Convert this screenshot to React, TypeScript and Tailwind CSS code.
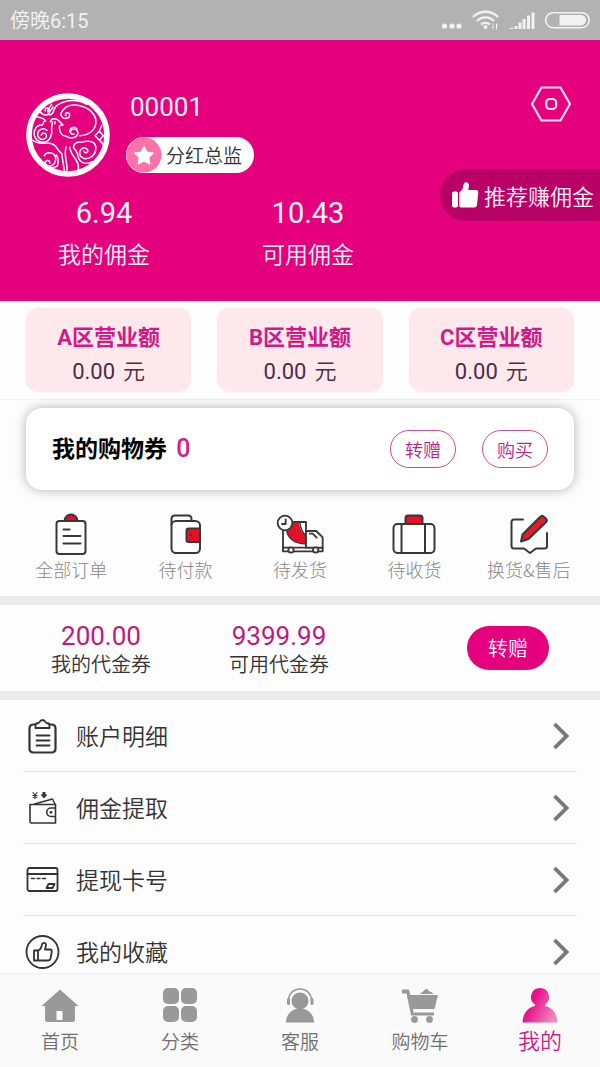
import type { ReactNode } from 'react';

interface StatProps {
  value: string;
  label: string;
}

function StatusBar() {
  return (
    <div className="flex h-10 shrink-0 items-center justify-between bg-[#b2b2b2] pr-2 pl-2.5 text-[#f2f2f2]">
      <span className="text-xl">
        傍晚<span className="font-[Roboto] font-normal">6:15</span>
      </span>
      <svg className="h-6 w-40" viewBox="432 8 160 24" fill="currentColor" aria-hidden="true">
        <circle cx="444.500" cy="26" r="2.600" />
        <circle cx="452" cy="26" r="2.600" />
        <circle cx="459" cy="26" r="2.600" />
        <g fill="none" stroke="currentColor" strokeWidth="2.300">
          <path d="M473 17a17.500 17.500 0 0 1 25 0" />
          <path d="M477 21a12 12 0 0 1 17 0" />
          <path d="M481 24.500a7 7 0 0 1 9 0" />
        </g>
        <circle cx="485.500" cy="27" r="2" />
        <path d="M493.500 23v6.500l-2-2.500h1.200V24zM496 29.500V23l2.500 2.500H497v3.500z" />
        <path d="M509 29l4-2v2zM514.500 26h3v3h-3zM518.500 22.500h3V29h-3zM522.500 19h3v10h-3zM527 15.500h3V29h-3zM531.500 12.500h3V29h-3z" />
        <rect x="545.700" y="12.700" width="43.500" height="15" rx="7.500" fill="none" stroke="currentColor" strokeWidth="1.600" />
        <path d="M559.500 15H581a5 5 0 0 1 5 5.200 5 5 0 0 1-5 5.200h-21.500z" />
      </svg>
    </div>
  );
}

function Avatar() {
  return (
    <svg className="mt-[7px] size-[84px] shrink-0" viewBox="35 38 252 252" fill="none" stroke="#fff" strokeLinecap="round" strokeLinejoin="round" strokeWidth="4.500" role="img" aria-label="头像">
      <circle cx="161" cy="164" r="117" strokeWidth="17" />
      {/* body and tail */}
      <path d="M106 104c16-2 8-22 24-30 26-18 62-18 88-2M112 72c-4 10-14 12-12 22 8 2 12-8 16-14" />
      <path d="M144 92c14-22 46-22 70-10 22 10 34 30 30 50-4 20-24 34-48 34M144 92c-10 12 0 24 12 22 14-2 12-18 2-17-6 1-6 7-2 9" />
      <path d="M108 124c4-12 16-10 22-6l16 16c-12-2-12 6-10 14 2 12 6 18 20 20 12 8 30 6 34-6 4-14-12-20-20-12-5 8 2 14 9 11" />
      <path d="M166 154c0-12 14-18 22-8M122 124v6" />
      {/* left wing */}
      <path d="M114 124c2 8-4 12-2 22 2 16-4 38-24 40-22 0-34-20-26-38 4-12 14-14 22-14l6-12" />
      <path d="M98 150c-12-10-28-2-28 12s20 22 26 8c4-12-14-16-15-5" />
      <path d="M76 92c12 18 32 14 30-2-3-10-16-8-13 1M70 110c10 2 20 4 24 12" />
      {/* legs and lower curls */}
      <path d="M56 180c16 16 36 4 56 10 14 2 14 16 30 30l8 50M90 226c8-14 34-10 34 10s-26 28-32 14c0-12 16-12 14-2M78 244c14 14 34 22 50 14 6-10 4-26-2-34" />
      <path d="M156 200c-10 22 4 44 2 70M166 200c2 28 32 40 26 68" />
      <path d="M178 204c-2-14 8-20 22-18 22-6 48-6 44 22-2 24-34 36-46 18-8-18 14-32 22-17 2 9-9 11-11 4M178 204c12 6 12 24 16 32 8 14 24 16 40 8" />
      <path d="M242 166l13-14 12 14-12 14zM262 136l-7 16M256 180l10 12" />
    </svg>
  );
}

function Stat({ value, label }: StatProps) {
  return (
    <div className="flex w-[204px] flex-col items-center">
      <span className="font-[Roboto] text-[29px] leading-10 font-normal">{value}</span>
      <span className="text-[23px] leading-10">{label}</span>
    </div>
  );
}

function Profile() {
  return (
    <section className="bg-[#e5007e] pt-[46px] pb-7 text-[#fff2f9]">
      <div className="flex items-start pl-[26px]">
        <Avatar />
        <div className="ml-4 flex flex-col items-start gap-3 pt-[3px]">
          <span className="pl-1 font-[Roboto] text-[26px] leading-9 font-normal">00001</span>
          <span className="flex h-9 items-center gap-1 rounded-full bg-white pr-3 text-[19px] text-[#333]">
            <svg className="h-9 w-9" viewBox="0 0 36 36" aria-hidden="true">
              <circle cx="18" cy="18" r="17.500" fill="#fb72ab" />
              <path d="M18 9l3 6 6.600 1-4.800 4.600L24 27.200l-6-3.100-6 3.100 1.200-6.600L8.400 16l6.600-1z" fill="#fff" stroke="#fff" strokeLinejoin="round" />
            </svg>
            分红总监
          </span>
        </div>
        <button type="button" aria-label="设置" className="mr-7 ml-auto">
          <svg className="h-9 w-[42px]" viewBox="0 0 42 36" fill="none" stroke="#ffe0f1" strokeWidth="2.200" strokeLinejoin="round">
            <path d="M11.500 1.500h19l9.500 16.500-9.500 16.500h-19L2 18z" />
            <rect x="16.200" y="13" width="10" height="10" rx="3.800" />
          </svg>
        </button>
      </div>
      <div className="relative mt-4 flex pl-0.5">
        <Stat value="6.94" label="我的佣金" />
        <Stat value="10.43" label="可用佣金" />
        <a href="#share" className="absolute -top-6 right-0 flex h-[52px] items-center gap-1 rounded-l-full bg-[#b80067] pr-1.5 pl-3 text-[22px]">
          <svg className="h-7 w-7" viewBox="0 0 28 28" fill="#fff" aria-hidden="true">
            <rect x="0" y="10.500" width="6" height="16" rx="2" />
            <path d="M7.200 12c0-2 3-1.500 3.800-5.500L11.700 3C12.500.3 17 .500 17 4.500L16.300 9H24c1.800 0 2.500 1.200 2.300 2.700L25 24c-.2 1.600-1.200 2.500-2.800 2.500H9c-1.200 0-1.800-.8-1.800-2z" />
          </svg>
          推荐赚佣金
        </a>
      </div>
    </section>
  );
}

function Turnover() {
  return (
    <section className="grid grid-cols-3 gap-[26px] border-b border-[#f3f3f3] px-[26px] py-[7px] font-[Roboto,'Noto_Sans_CJK_SC',sans-serif]">
      {['A', 'B', 'C'].map((zone) => (
        <div key={zone} className="flex h-[84px] flex-col items-center rounded-xl bg-[#fde8ec] pt-3">
          <h2 className="text-[22px] leading-9 font-bold text-[#d11a87]">{zone}区营业额</h2>
          <p className="flex gap-2 text-[22px] leading-8 text-[#4d2b49]">
            <span className="font-normal">0.00</span>
            <span>元</span>
          </p>
        </div>
      ))}
    </section>
  );
}

function Coupons() {
  return (
    <section className="mx-[26px] mt-2 flex h-[82px] items-center rounded-2xl bg-white px-[26px] shadow-[0_0_12px_rgba(0,0,0,0.3)]">
      <h2 className="text-[23px] font-bold text-black">
        我的购物券 <span className="ml-1 font-[Roboto] text-[25px] font-medium text-[#c9248c]">0</span>
      </h2>
      <div className="ml-auto flex gap-[26px] text-lg text-[#b5238a]">
        <button type="button" className="h-[38px] w-[66px] rounded-full border border-[#c0509c]">转赠</button>
        <button type="button" className="h-[38px] w-[66px] rounded-full border border-[#c0509c]">购买</button>
      </div>
    </section>
  );
}

const orders: { label: string; icon: ReactNode }[] = [
  {
    label: '全部订单',
    icon: (
      <>
        <path d="M18.500 10a6.500 6.500 0 0 1 13 0z" fill="#e60f28" />
        <rect x="10.500" y="10" width="29" height="33" rx="3" fill="#fff" />
        <path d="M17.500 18.500h6M17.500 25h17M17.500 32.500h17" />
      </>
    ),
  },
  {
    label: '待付款',
    icon: (
      <>
        <path d="M10.500 14V8c0-2 1.500-3.500 3.500-3.500h13c2 0 3.500 1.300 3.500 3.500v2" />
        <rect x="10.500" y="10" width="28.500" height="32" rx="4.500" fill="#fff" />
        <path d="M39 17.500H27.500a2 2 0 0 0-2 2V29a2 2 0 0 0 2 2H39z" fill="#e60f28" />
        <circle cx="29.500" cy="24" r=".7" strokeWidth="1" />
      </>
    ),
  },
  {
    label: '待发货',
    icon: (
      <g transform="translate(-5 -3) scale(.3333)" strokeWidth="5.500">
        <path d="M39 42h69v78H39z" fill="#fff" />
        <path d="M50 68c4 24 24 40 58 40V84C98 76 88 62 88 44H66z" fill="#e60f28" stroke="none" />
        <path d="M50 68c4 24 24 40 58 40M90 44c1 16 8 30 18 40" strokeWidth="4" />
        <circle cx="45" cy="45" r="22" fill="#fff" />
        <path d="M47 34v14H36" />
        <path d="M39 119h119v11H39z" fill="#fff" />
        <path d="M108 69h31l19 19v31h-50z" fill="#fff" />
        <path d="M119 77h9l12 12" />
        <circle cx="63" cy="126" r="8" fill="#fff" />
        <circle cx="137" cy="126" r="8" fill="#fff" />
      </g>
    ),
  },
  {
    label: '待收货',
    icon: (
      <>
        <path d="M16.500 13V7c0-1.600 1-2.500 2.500-2.500h12c1.500 0 2.500.9 2.500 2.500v6z" fill="#e60f28" />
        <rect x="4.500" y="13" width="41" height="29" rx="4" fill="#fff" />
        <path d="M12.500 13v29M36 13v29" />
      </>
    ),
  },
  {
    label: '换货&售后',
    icon: (
      <>
        <path d="M19 8.500H10c-2 0-2.500 1-2.500 2.500v24c0 2 1 2.500 2.500 2.500h10l6 4.500 6-4.500h8.500c2 0 2.500-1 2.500-2.500V22" />
        <path d="M17 30.500l1.500-7L36 6c1-1.300 2.300-1.500 3.500-.5l2.500 2c1.200 1 1.200 2.500.2 3.500L24.500 28z" fill="#dc1f2a" />
      </>
    ),
  },
];

function Orders() {
  return (
    <nav className="mt-[21px] grid grid-cols-5 px-3.5 pb-[13px]" aria-label="订单">
      {orders.map(({ label, icon }) => (
        <a key={label} href="#orders" className="flex flex-col items-center text-lg leading-7 font-light whitespace-nowrap text-[#888]">
          <svg className="h-11 w-[50px]" viewBox="0 0 50 44" fill="none" stroke="#383838" strokeWidth="2" strokeLinecap="round" strokeLinejoin="round" aria-hidden="true">
            {icon}
          </svg>
          {label}
        </a>
      ))}
    </nav>
  );
}

function Vouchers() {
  const vouchers: StatProps[] = [
    { value: '200.00', label: '我的代金券' },
    { value: '9399.99', label: '可用代金券' },
  ];

  return (
    <section className="flex items-center border-y-[9px] border-[#ebebeb] py-[15px] pr-[51px] pl-3">
      {vouchers.map(({ value, label }) => (
        <div key={label} className="flex w-[178px] flex-col items-center">
          <span className="font-[Roboto] text-[26px] leading-8 font-normal text-[#bd1a80]">{value}</span>
          <span className="text-xl leading-6 text-[#333]">{label}</span>
        </div>
      ))}
      <button type="button" className="ml-auto h-11 w-[82px] rounded-full bg-[#e5007e] text-xl text-white">转赠</button>
    </section>
  );
}

const menu: { label: string; icon: ReactNode }[] = [
  {
    label: '账户明细',
    icon: (
      <>
        <path d="M10 6.500H8C5.500 6.500 4 8 4 10.500v20C4 33 5.500 34.500 8 34.500h18c2.500 0 4-1.500 4-4v-20c0-2.500-1.500-4-4-4h-2" strokeWidth="2.200" />
        <path d="M10 10V7.500c0-1.500 1.500-2.500 3-2.500 1 0 1-3 4-3s3 3 4 3c1.500 0 3 1 3 2.500V10z" fill="#fff" />
        <path d="M11 17.500h13M11 22.500h13M11 27.500h13" />
      </>
    ),
  },
  {
    label: '佣金提取',
    icon: (
      <g transform="translate(0 -2)">
        <path d="M30 19.500v-3H4.500v17c0 .8.500 1.500 1.500 1.500h24v-6M30 20h-4.500a4.200 4.200 0 0 0 0 8.500H30z" strokeWidth="1.600" />
        <path d="M9 16l18-5 2.500 5" strokeWidth="1.400" />
        <circle cx="25.500" cy="24.300" r="1.400" fill="#333" stroke="none" />
        <path d="M7.500 4.500l2 2.500 2-2.500M9.500 7v3.500M7.500 7.500h4M7.500 9.200h4" strokeWidth="1.100" />
        <path d="M17 4h3v2.500h2L18.500 10.500 15 6.500h2z" fill="#333" stroke="none" />
      </g>
    ),
  },
  {
    label: '提现卡号',
    icon: (
      <>
        <rect x="2" y="6" width="30" height="23" rx="2" />
        <path d="M2 12h30" />
        <path d="M6 16.500h3M11.500 16.500h3M17 16.500h3" strokeWidth="1.500" />
        <path d="M21 26l2-4h6l-2 4z" />
      </>
    ),
  },
  {
    label: '我的收藏',
    icon: (
      <>
        <circle cx="17" cy="18" r="16" />
        <path d="M8.500 16.500h4v10h-4zM12.500 16.500c3-.5 3.500-3.500 4-6 .5-2.500 4-2 4 1l-1 4h5c1.500 0 2 1 1.800 2.200l-1.300 7c-.2 1.200-1 1.800-2.200 1.800H12.500" />
      </>
    ),
  },
];

function Menu() {
  return (
    <ul className="px-[23px]">
      {menu.map(({ label, icon }) => (
        <li key={label} className="border-b border-[#e2e2e2]">
          <a href="#menu" className="flex h-[71px] items-center pr-2 pl-0.5 text-[23px] text-[#333]">
            <svg className="mr-4 h-9 w-[35px]" viewBox="0 0 34 36" fill="none" stroke="#333" strokeWidth="1.800" strokeLinecap="round" strokeLinejoin="round" aria-hidden="true">
              {icon}
            </svg>
            {label}
            <svg className="ml-auto h-7 w-4" viewBox="0 0 16 28" fill="none" stroke="#777" strokeWidth="3.800" aria-hidden="true">
              <path d="M1.500 2L13.500 14 1.500 26" />
            </svg>
          </a>
        </li>
      ))}
    </ul>
  );
}

const tabs: { label: string; icon: ReactNode }[] = [
  {
    label: '首页',
    icon: <path d="M20 2.500L38.500 19H35v13.500c0 1.500-1 2.500-2.500 2.500h-25C6 35 5 34 5 32.500V19H1.500zM16.500 24v9h6v-9z" fillRule="evenodd" />,
  },
  {
    label: '分类',
    icon: (
      <>
        <rect x="3" y="1" width="16" height="16" rx="5" />
        <rect x="21" y="1" width="16" height="16" rx="5" />
        <rect x="3" y="19" width="16" height="16" rx="5" />
        <rect x="21" y="19" width="16" height="16" rx="5" />
      </>
    ),
  },
  {
    label: '客服',
    icon: (
      <>
        <circle cx="20" cy="14" r="8.500" />
        <path d="M6 35.500c0-7 4.500-12 10-13.500h8c5.500 1.500 10 6.500 10 13.500z" />
        <path d="M8.500 13C9 6 14 2 20 2s11 4 11.500 11" fill="none" stroke="currentColor" strokeWidth="1.500" />
        <rect x="7" y="11" width="3" height="7" rx="1.500" />
        <rect x="30.500" y="11" width="3" height="7" rx="1.500" />
      </>
    ),
  },
  {
    label: '购物车',
    icon: (
      <>
        <path d="M2 2.500h7l1.300 5.500H38l-3.500 14H13l.5 3.500H34v3H11L6.500 6.500H2z" />
        <path d="M19.500 7c2-1.500 3.500-2 4.500-3.500l2.500-2 2.500 2.500c1.500 1 3.500 1.500 4.500 3z" />
        <circle cx="14.500" cy="32.500" r="3.400" />
        <circle cx="29.500" cy="32.500" r="3.400" />
      </>
    ),
  },
  {
    label: '我的',
    icon: (
      <>
        <linearGradient id="user" x1="0" y1="0" x2="40" y2="20" gradientUnits="userSpaceOnUse">
          <stop offset=".4" stopColor="#e6138a" />
          <stop offset="1" stopColor="#f08cc4" />
        </linearGradient>
        <path d="M20 1a9 9 0 0 1 5 16.500v1.500c7 1.500 12 7 12.500 16.500h-35C3 26 8 20.500 15 19v-1.500A9 9 0 0 1 20 1z" fill="url(#user)" />
      </>
    ),
  },
];

function TabBar() {
  return (
    <nav className="grid h-[94px] shrink-0 grid-cols-5 border-t-2 border-[#f3f3f3] bg-[#fafafa] pt-3" aria-label="主导航">
      {tabs.map(({ label, icon }) => (
        <a
          key={label}
          href="#tab"
          className="flex flex-col items-center text-[19px] leading-9 text-[#707070] aria-[current=page]:text-[22px] aria-[current=page]:leading-8 aria-[current=page]:text-[#d11a87]"
          aria-current={label === '我的' ? 'page' : undefined}
        >
          <svg className="h-9 w-10 text-[#999]" viewBox="0 0 40 36" fill="currentColor" aria-hidden="true">
            {icon}
          </svg>
          {label}
        </a>
      ))}
    </nav>
  );
}

export default function App() {
  return (
    <div className="flex h-dvh flex-col bg-[#fdfdfd] font-['Noto_Sans_CJK_SC',sans-serif] font-[350]" lang="zh-CN">
      <StatusBar />
      <main className="min-h-0 flex-1 overflow-y-auto [scrollbar-width:none]">
        <Profile />
        <Turnover />
        <Coupons />
        <Orders />
        <Vouchers />
        <Menu />
      </main>
      <TabBar />
    </div>
  );
}
